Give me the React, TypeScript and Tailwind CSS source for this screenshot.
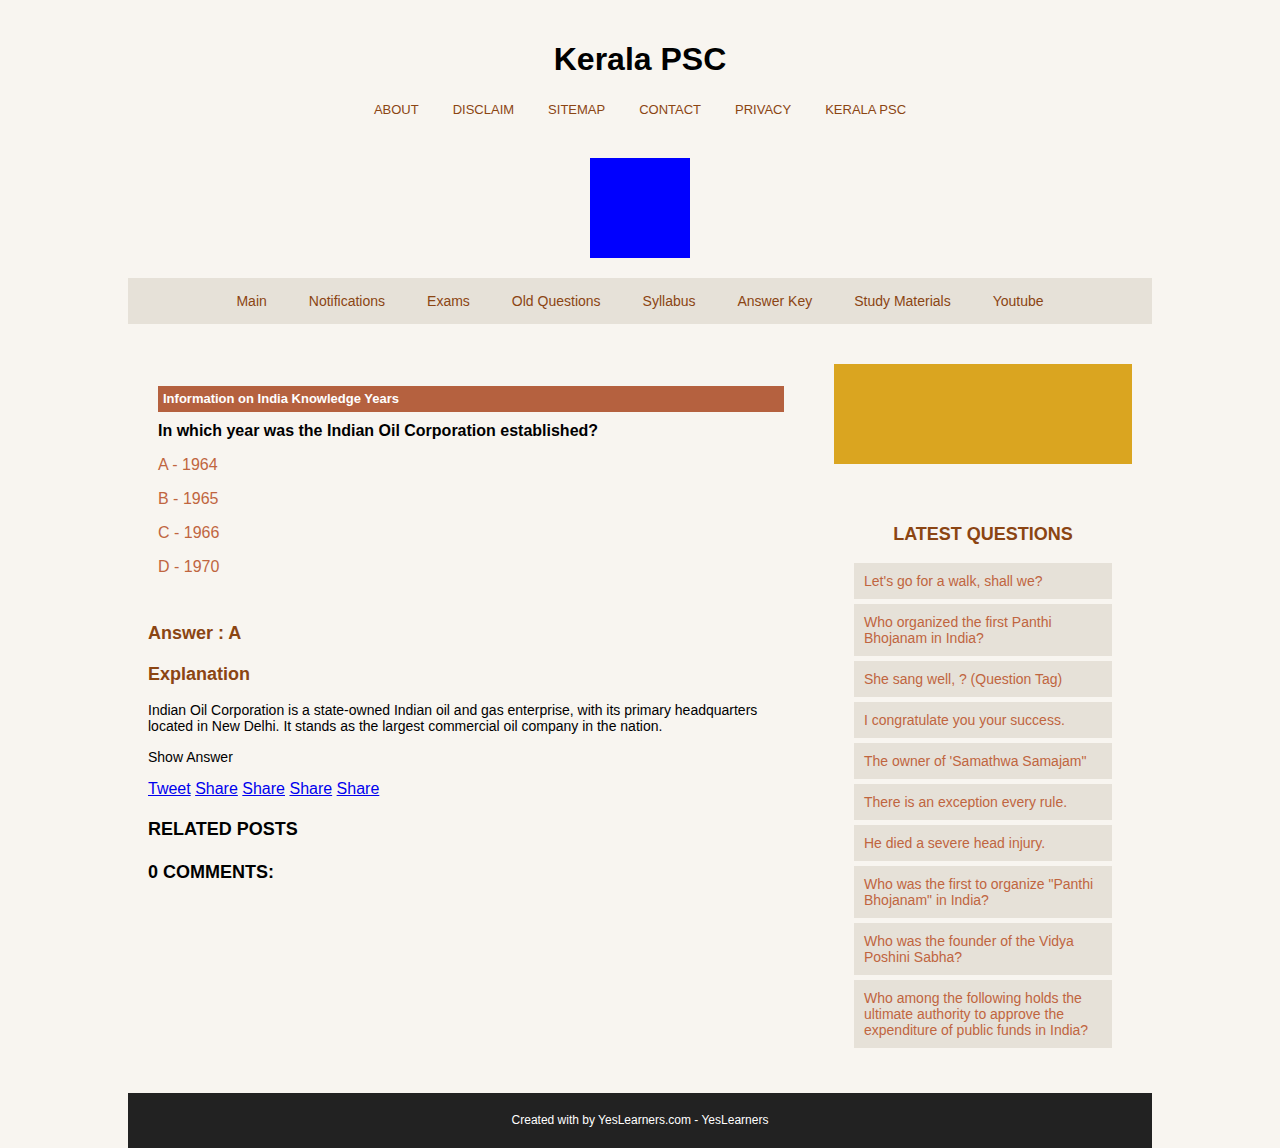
import React from "react";

const topLinks = ["ABOUT", "DISCLAIM", "SITEMAP", "CONTACT", "PRIVACY", "KERALA PSC"];
const mainLinks = [
  "Main",
  "Notifications",
  "Exams",
  "Old Questions",
  "Syllabus",
  "Answer Key",
  "Study Materials",
  "Youtube",
];
const options = ["A - 1964", "B - 1965", "C - 1966", "D - 1970"];
const latest = [
  "Let's go for a walk, shall we?",
  "Who organized the first Panthi Bhojanam in India?",
  "She sang well, ? (Question Tag)",
  "I congratulate you your success.",
  "The owner of 'Samathwa Samajam\"",
  "There is an exception every rule.",
  "He died a severe head injury.",
  "Who was the first to organize \"Panthi Bhojanam\" in India?",
  "Who was the founder of the Vidya Poshini Sabha?",
  "Who among the following holds the ultimate authority to approve the expenditure of public funds in India?",
];

const App = () => {
  return (
    <div className="min-h-[1148px] bg-[#f8f5f0] font-['Liberation_Sans',Arial,sans-serif] text-black">
      {/* Header */}
      <header className="pt-[41px] text-center">
        <h1 className="text-[32px] font-bold leading-[37px]">Kerala PSC</h1>
        <nav className="mt-[24px] flex justify-center gap-[34px] text-[13px] leading-[15px] text-[#8b4513]">
          {topLinks.map((l) => (
            <a key={l} href="#">
              {l}
            </a>
          ))}
        </nav>
        <div className="mx-auto mt-[41px] h-[100px] w-[100px] bg-[#0000ff]"></div>
      </header>

      <div className="mx-auto mt-[20px] w-[1024px]">
        {/* Main nav */}
        <nav className="flex h-[46px] items-center justify-center gap-[42px] bg-[#e6e1d8] text-[14px] text-[#8b4513]">
          {mainLinks.map((l) => (
            <a key={l} href="#">
              {l}
            </a>
          ))}
        </nav>

        <div className="flex gap-[40px] px-[20px] pt-[40px]">
          {/* Left column */}
          <main className="w-[646px]">
            <div className="mx-[10px] mt-[22px]">
              <div className="h-[26px] bg-[#b5613f] pl-[5px] text-[13px] font-bold leading-[26px] text-white">
                Information on India Knowledge Years
              </div>
              <p className="mt-[10px] text-[16px] font-bold leading-[18px]">
                In which year was the Indian Oil Corporation established?
              </p>
              <div className="mt-[16px] flex flex-col gap-[16px] text-[16px] leading-[18px] text-[#c0653f]">
                {options.map((o) => (
                  <div key={o}>{o}</div>
                ))}
              </div>
            </div>

            <h3 className="mt-[47px] text-[18px] font-bold leading-[21px] text-[#8b4513]">Answer : A</h3>
            <h3 className="mt-[20px] text-[18px] font-bold leading-[21px] text-[#8b4513]">Explanation</h3>
            <p className="mt-[17px] text-[14px] leading-[16px]">
              Indian Oil Corporation is a state-owned Indian oil and gas enterprise, with its primary headquarters
              located in New Delhi. It stands as the largest commercial oil company in the nation.
            </p>
            <div className="mt-[15px] text-[14px] leading-[16px]">Show Answer</div>
            <div className="mt-[15px] text-[16px] leading-[18px]">
              <a href="#" className="text-[#0000ee] underline">Tweet</a>{" "}
              <a href="#" className="text-[#0000ee] underline">Share</a>{" "}
              <a href="#" className="text-[#0000ee] underline">Share</a>{" "}
              <a href="#" className="text-[#0000ee] underline">Share</a>{" "}
              <a href="#" className="text-[#0000ee] underline">Share</a>
            </div>
            <h4 className="mt-[21px] text-[18px] font-bold leading-[21px]">RELATED POSTS</h4>
            <h4 className="mt-[22px] text-[18px] font-bold leading-[21px]">0 COMMENTS:</h4>
          </main>

          {/* Sidebar */}
          <aside className="w-[298px]">
            <div className="h-[100px] bg-[#daa520]"></div>
            <h2 className="mt-[60px] text-center text-[18px] font-bold leading-[21px] text-[#8b4513]">
              LATEST QUESTIONS
            </h2>
            <ul className="mx-[20px] mt-[18px] flex flex-col gap-[5px]">
              {latest.map((q) => (
                <li key={q} className="bg-[#e6e1d8] p-[10px] text-[14px] leading-[16px] text-[#c0653f]">
                  {q}
                </li>
              ))}
            </ul>
          </aside>
        </div>

        {/* Footer */}
        <footer className="mt-[45px] bg-[#222222] py-[20px] text-center text-[12px] leading-[15px] text-white">
          Created with by YesLearners.com - YesLearners
        </footer>
      </div>
    </div>
  );
};

export default App;
